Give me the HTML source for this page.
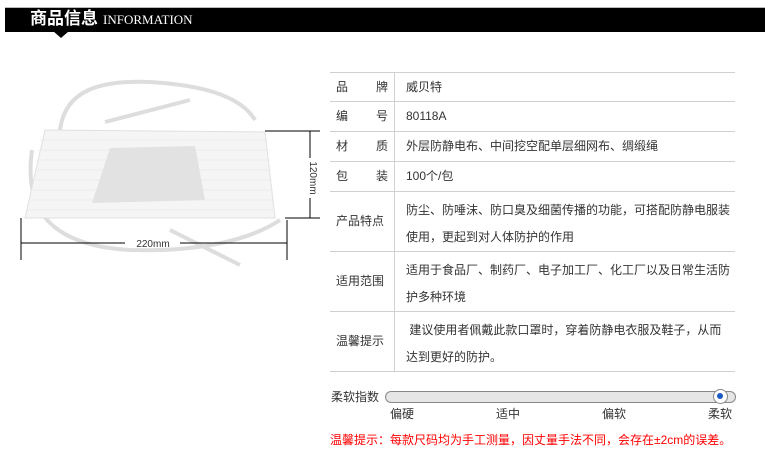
<!DOCTYPE html>
<html><head><meta charset="utf-8"><style>
body{margin:0;width:765px;height:454px;background:#fff;position:relative;overflow:hidden;font-family:"Liberation Sans","Noto Sans CJK SC",sans-serif;color:#333}
.a{position:absolute}
.bar{left:5px;top:7px;width:760px;height:24px;background:#000;border-top:1px solid #bbb}
.tri{left:53px;top:31px;width:0;height:0;border-left:8px solid transparent;border-right:8px solid transparent;border-top:7px solid #000}
.h{left:30px;top:8px;color:#fff;font-size:17px;font-weight:bold;line-height:22px}
.h span{font-family:"Liberation Serif",serif;font-weight:normal;font-size:13px;margin-left:5px}
.hl{left:330px;width:405px;height:1px;background:#d0d0d0}
.vl{left:394px;top:72px;width:1px;height:299px;background:#d0d0d0}
.t{font-size:12px;line-height:20px;color:#333}
.lbl{left:336px;width:52px}
.val{left:406px;width:328px}
</style></head><body>
<div class="a bar"></div><div class="a tri"></div>
<div class="a h">商品信息<span>INFORMATION</span></div>

<svg class="a" style="left:0;top:70px" width="330" height="210" viewBox="0 0 330 210">
<g fill="none" stroke="#ddd" stroke-width="4">
<path d="M60 60 C65 20,100 10,150 12 C200 15,240 25,255 50"/>
<path d="M105 52 L190 30"/>
<path d="M32 80 C25 130,40 175,130 180 C200 182,250 170,280 150"/>
<path d="M170 160 L240 195"/>
</g>
<path d="M45 60 L265 62 L275 148 L25 148 Z" fill="#f5f5f5" stroke="#e0e0e0"/>
<g stroke="#ececec" stroke-width="1">
<path d="M40 70H268M38 80H269M37 90H270M35 100H271M33 110H272M31 120H273M29 130H274M27 140H275"/>
</g>
<path d="M110 78 L195 76 L205 130 L92 133 Z" fill="#e2e2e2"/>
<g stroke="#000" stroke-width="1">
<path d="M265 61H320M285 148H320M310 61V148"/>
<path d="M21 148V190M287 150V190M21 173H125M180 173H287"/>
</g>
<rect x="303" y="88" width="14" height="40" fill="#fff"/>
<text x="310" y="108" font-size="10" fill="#333" transform="rotate(90 310 108)" text-anchor="middle" font-family="Liberation Sans">120mm</text>
<text x="153" y="177" font-size="10" fill="#333" text-anchor="middle" font-family="Liberation Sans">220mm</text>
</svg>

<div class="a hl" style="top:72px"></div>
<div class="a hl" style="top:101px"></div>
<div class="a hl" style="top:131px"></div>
<div class="a hl" style="top:161px"></div>
<div class="a hl" style="top:191px"></div>
<div class="a hl" style="top:251px"></div>
<div class="a hl" style="top:311px"></div>
<div class="a hl" style="top:371px"></div>
<div class="a vl"></div>

<div class="a t lbl" style="top:77px;text-align:justify;text-align-last:justify">品 牌</div>
<div class="a t val" style="top:77px">威贝特</div>
<div class="a t lbl" style="top:106px;text-align-last:justify">编 号</div>
<div class="a t val" style="top:106px">80118A</div>
<div class="a t lbl" style="top:136px;text-align-last:justify">材 质</div>
<div class="a t val" style="top:136px">外层防静电布、中间挖空配单层细网布、绸缎绳</div>
<div class="a t lbl" style="top:166px;text-align-last:justify">包 装</div>
<div class="a t val" style="top:166px">100个/包</div>
<div class="a t lbl" style="top:211px">产品特点</div>
<div class="a t val" style="top:197px;line-height:27px">防尘、防唾沫、防口臭及细菌传播的功能，可搭配防静电服装使用，更起到对人体防护的作用</div>
<div class="a t lbl" style="top:271px">适用范围</div>
<div class="a t val" style="top:257px;line-height:27px">适用于食品厂、制药厂、电子加工厂、化工厂以及日常生活防护多种环境</div>
<div class="a t lbl" style="top:331px">温馨提示</div>
<div class="a t val" style="top:317px;line-height:27px">&nbsp;建议使用者佩戴此款口罩时，穿着防静电衣服及鞋子，从而<br>达到更好的防护。</div>

<div class="a t" style="left:331px;top:387px">柔软指数</div>
<div class="a" style="left:385px;top:391px;width:349px;height:10px;border:1px solid #888;border-radius:6px;background:#e6e6e6"></div>
<div class="a" style="left:713px;top:389px;width:13px;height:13px;border:1px solid #888;border-radius:50%;background:#fff"></div>
<div class="a" style="left:717px;top:393px;width:6px;height:6px;border-radius:50%;background:#1a5bc4"></div>
<div class="a t" style="left:390px;top:404px">偏硬</div>
<div class="a t" style="left:496px;top:404px">适中</div>
<div class="a t" style="left:602px;top:404px">偏软</div>
<div class="a t" style="left:708px;top:404px">柔软</div>
<div class="a" style="left:330px;top:432px;font-size:12px;line-height:16px;color:#f00">温馨提示：每款尺码均为手工测量，因丈量手法不同，会存在±2cm的误差。</div>
</body></html>
